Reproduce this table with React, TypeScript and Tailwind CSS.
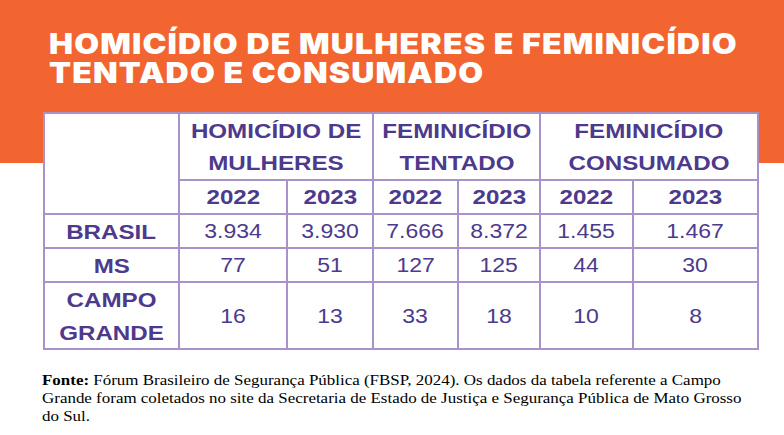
import React from "react";

function S({ children, bold }: { children: React.ReactNode; bold?: boolean }) {
  return (
    <span className={"inline-block scale-x-[1.15] " + (bold ? "font-bold" : "font-normal")}>{children}</span>
  );
}

const rows: { label: React.ReactNode; vals: string[] }[] = [
  { label: "BRASIL", vals: ["3.934", "3.930", "7.666", "8.372", "1.455", "1.467"] },
  { label: "MS", vals: ["77", "51", "127", "125", "44", "30"] },
  {
    label: (
      <>
        CAMPO
        <br />
        GRANDE
      </>
    ),
    vals: ["16", "13", "33", "18", "10", "8"],
  },
];

export default function App() {
  return (
    <div className="w-[784px] h-[435px] overflow-hidden bg-[linear-gradient(to_bottom,#F26531_0,#F26531_163px,#ffffff_163px)] font-['Liberation_Sans',Arial,sans-serif]">
      <h1 className="pl-[49px] pt-[30px] text-white font-['Inter',sans-serif] font-black text-[28px] leading-[28.5px] tracking-[1px] whitespace-nowrap">
        <span className="inline-block origin-left scale-x-[1.145]">
          HOMICÍDIO DE MULHERES E FEMINICÍDIO
          <br />
          TENTADO E CONSUMADO
        </span>
      </h1>
      <div className="ml-[43px] mt-[25px] w-[716px] bg-[#a892c9] p-[2px] text-[#4d3a8c]">
        <div className="grid grid-cols-[133px_106px_84px_83px_80px_91px_123px] grid-rows-[65px_32px_32px_32px_65px] gap-[2px]">
          <div className="row-span-2 bg-white" />
          {[
            ["HOMICÍDIO DE", "MULHERES"],
            ["FEMINICÍDIO", "TENTADO"],
            ["FEMINICÍDIO", "CONSUMADO"],
          ].map(([a, b], i) => (
            <div key={i} className="col-span-2 bg-white flex flex-col items-center justify-center text-[21px] leading-[32px]">
              <S bold>{a}</S>
              <S bold>{b}</S>
            </div>
          ))}
          {[0, 1, 2, 3, 4, 5].map((i) => (
            <div key={i} className="bg-white flex items-center justify-center text-[21px]">
              <S bold>{i % 2 === 0 ? "2022" : "2023"}</S>
            </div>
          ))}
          {rows.map((r, ri) => (
            <React.Fragment key={ri}>
              <div className="bg-white flex items-center justify-center text-center text-[21px] leading-[33px]">
                <S bold>{r.label}</S>
              </div>
              {r.vals.map((v, vi) => (
                <div key={vi} className="bg-white flex items-center justify-center text-[20px]">
                  <S>{v}</S>
                </div>
              ))}
            </React.Fragment>
          ))}
        </div>
      </div>
      <p className="pl-[42px] mt-[21px] text-black font-['Liberation_Serif','Times_New_Roman',serif] text-[15px] leading-[18px] whitespace-nowrap">
        <span className="inline-block origin-left scale-x-[1.13]">
          <b>Fonte:</b> Fórum Brasileiro de Segurança Pública (FBSP, 2024). Os dados da tabela referente a Campo
          <br />
          Grande foram coletados no site da Secretaria de Estado de Justiça e Segurança Pública de Mato Grosso
          <br />
          do Sul.
        </span>
      </p>
    </div>
  );
}
